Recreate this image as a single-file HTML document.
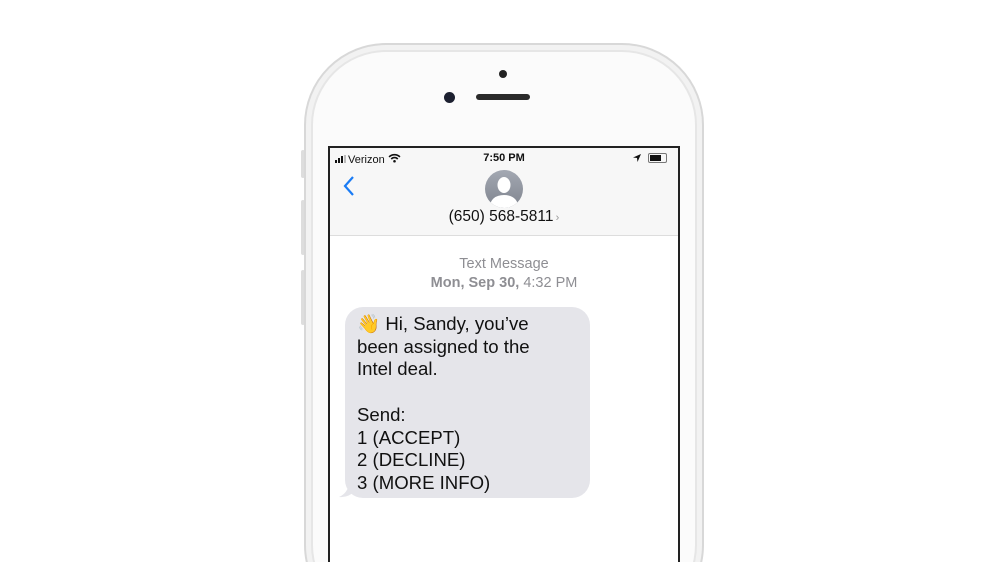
<!DOCTYPE html>
<html style="overflow:hidden;width:1000px;height:562px"><head><style>
html,body{margin:0;width:1000px;height:562px;background:#fff;overflow:hidden;position:relative;font-family:"Liberation Sans",sans-serif}
.phone{position:absolute;left:304px;top:43px;width:396px;height:580px;border-radius:82px;background:#fbfbfb;border:2px solid #d8d8d8;box-shadow:inset 0 0 0 5px #f2f2f2,inset 0 0 0 7px #e6e6e6}
.clip{position:absolute;left:0;top:0;width:1000px;height:562px;overflow:hidden}
.btn{position:absolute;background:#ddd;width:4px;border-radius:2px}
.screen{position:absolute;left:328px;top:146px;width:348px;height:420px;border:2px solid #222;background:#fff;overflow:hidden}
.hdr{position:absolute;left:0;top:0;width:348px;height:87px;background:#f7f7f7;border-bottom:1px solid #ddd}
.abs{position:absolute}
</style></head><body><div class="clip">
<div class="btn" style="left:301px;top:150px;height:28px"></div>
<div class="btn" style="left:301px;top:200px;height:55px"></div>
<div class="btn" style="left:301px;top:270px;height:55px"></div>
<div class="btn" style="left:699px;top:215px;height:60px"></div>
<div class="phone"></div>
<div class="abs" style="left:499px;top:70px;width:8px;height:8px;border-radius:50%;background:#222"></div>
<div class="abs" style="left:444px;top:92px;width:11px;height:11px;border-radius:50%;background:#1c2030"></div>
<div class="abs" style="left:476px;top:94px;width:54px;height:6px;border-radius:3px;background:#2a2a2a"></div>
<div class="screen">
 <div class="hdr"></div>
 <div class="abs" style="left:5px;top:5px;font-size:11px;color:#111">
  <span style="display:inline-block;width:2px;height:3px;background:#111;margin-right:1px"></span><span style="display:inline-block;width:2px;height:5px;background:#111;margin-right:1px"></span><span style="display:inline-block;width:2px;height:7px;background:#111;margin-right:1px"></span><span style="display:inline-block;width:2px;height:8px;background:#bbb;margin-right:2px"></span>Verizon <svg width="13" height="10" viewBox="0 0 12 9"><path d="M1 3.5A7 7 0 0 1 11 3.5M3 5.5A4 4 0 0 1 9 5.5" stroke="#111" stroke-width="1.5" fill="none"/><circle cx="6" cy="7.5" r="1.2" fill="#111"/></svg></div>
 <div class="abs" style="left:0;width:348px;top:4px;text-align:center;font-size:11px;font-weight:bold;color:#111">7:50 PM</div>
 <svg class="abs" style="left:302px;top:5px" width="10" height="10" viewBox="0 0 10 10"><path d="M9 1L1 4.5 5 5 5.5 9Z" fill="#111"/></svg>
 <div class="abs" style="left:318px;top:5px;width:17px;height:8px;border:1px solid #777;border-radius:2px"><div style="margin:1px;width:11px;height:6px;background:#111"></div></div>
 <svg class="abs" style="left:12px;top:27px" width="14" height="22" viewBox="0 0 14 22"><path d="M11 2L3 11l8 9" stroke="#1a7cf5" stroke-width="2.2" fill="none"/></svg>
 <svg class="abs" style="left:155px;top:22px" width="38" height="38" viewBox="0 0 38 38"><defs><linearGradient id="g" x1="0" y1="0" x2="0" y2="1"><stop offset="0" stop-color="#a3a8b2"/><stop offset="1" stop-color="#80858f"/></linearGradient><clipPath id="c"><circle cx="19" cy="19" r="19"/></clipPath></defs><circle cx="19" cy="19" r="19" fill="url(#g)"/><g clip-path="url(#c)"><ellipse cx="19" cy="15" rx="6.5" ry="8" fill="#fff"/><path d="M4 38Q6 25 19 25Q32 25 34 38Z" fill="#fff"/></g></svg>
 <div class="abs" style="left:0;width:348px;top:60px;text-align:center;font-size:15.5px;color:#111">(650) 568-5811<span style="font-size:11px;color:#999">&thinsp;›</span></div>
 <div class="abs" style="left:0;width:348px;top:107px;text-align:center;font-size:14.5px;color:#8e8e93;line-height:19px">Text Message<br><span style="font-weight:bold">Mon, Sep 30,</span> 4:32 PM</div>
 <div class="abs" style="left:15px;top:159px;width:245px;height:191px;background:#e5e5ea;border-radius:18px"></div>
 <svg class="abs" style="left:9px;top:335px" width="16" height="16" viewBox="0 0 16 16"><path d="M10 0Q9 10 0 14Q9 15 16 8Z" fill="#e5e5ea"/></svg>
 <div class="abs" style="left:27px;top:165px;font-size:18.6px;line-height:22.7px;color:#111;white-space:pre">👋 Hi, Sandy, you’ve
been assigned to the
Intel deal.

Send:
1 (ACCEPT)
2 (DECLINE)
3 (MORE INFO)</div>
</div>
</div></body></html>
